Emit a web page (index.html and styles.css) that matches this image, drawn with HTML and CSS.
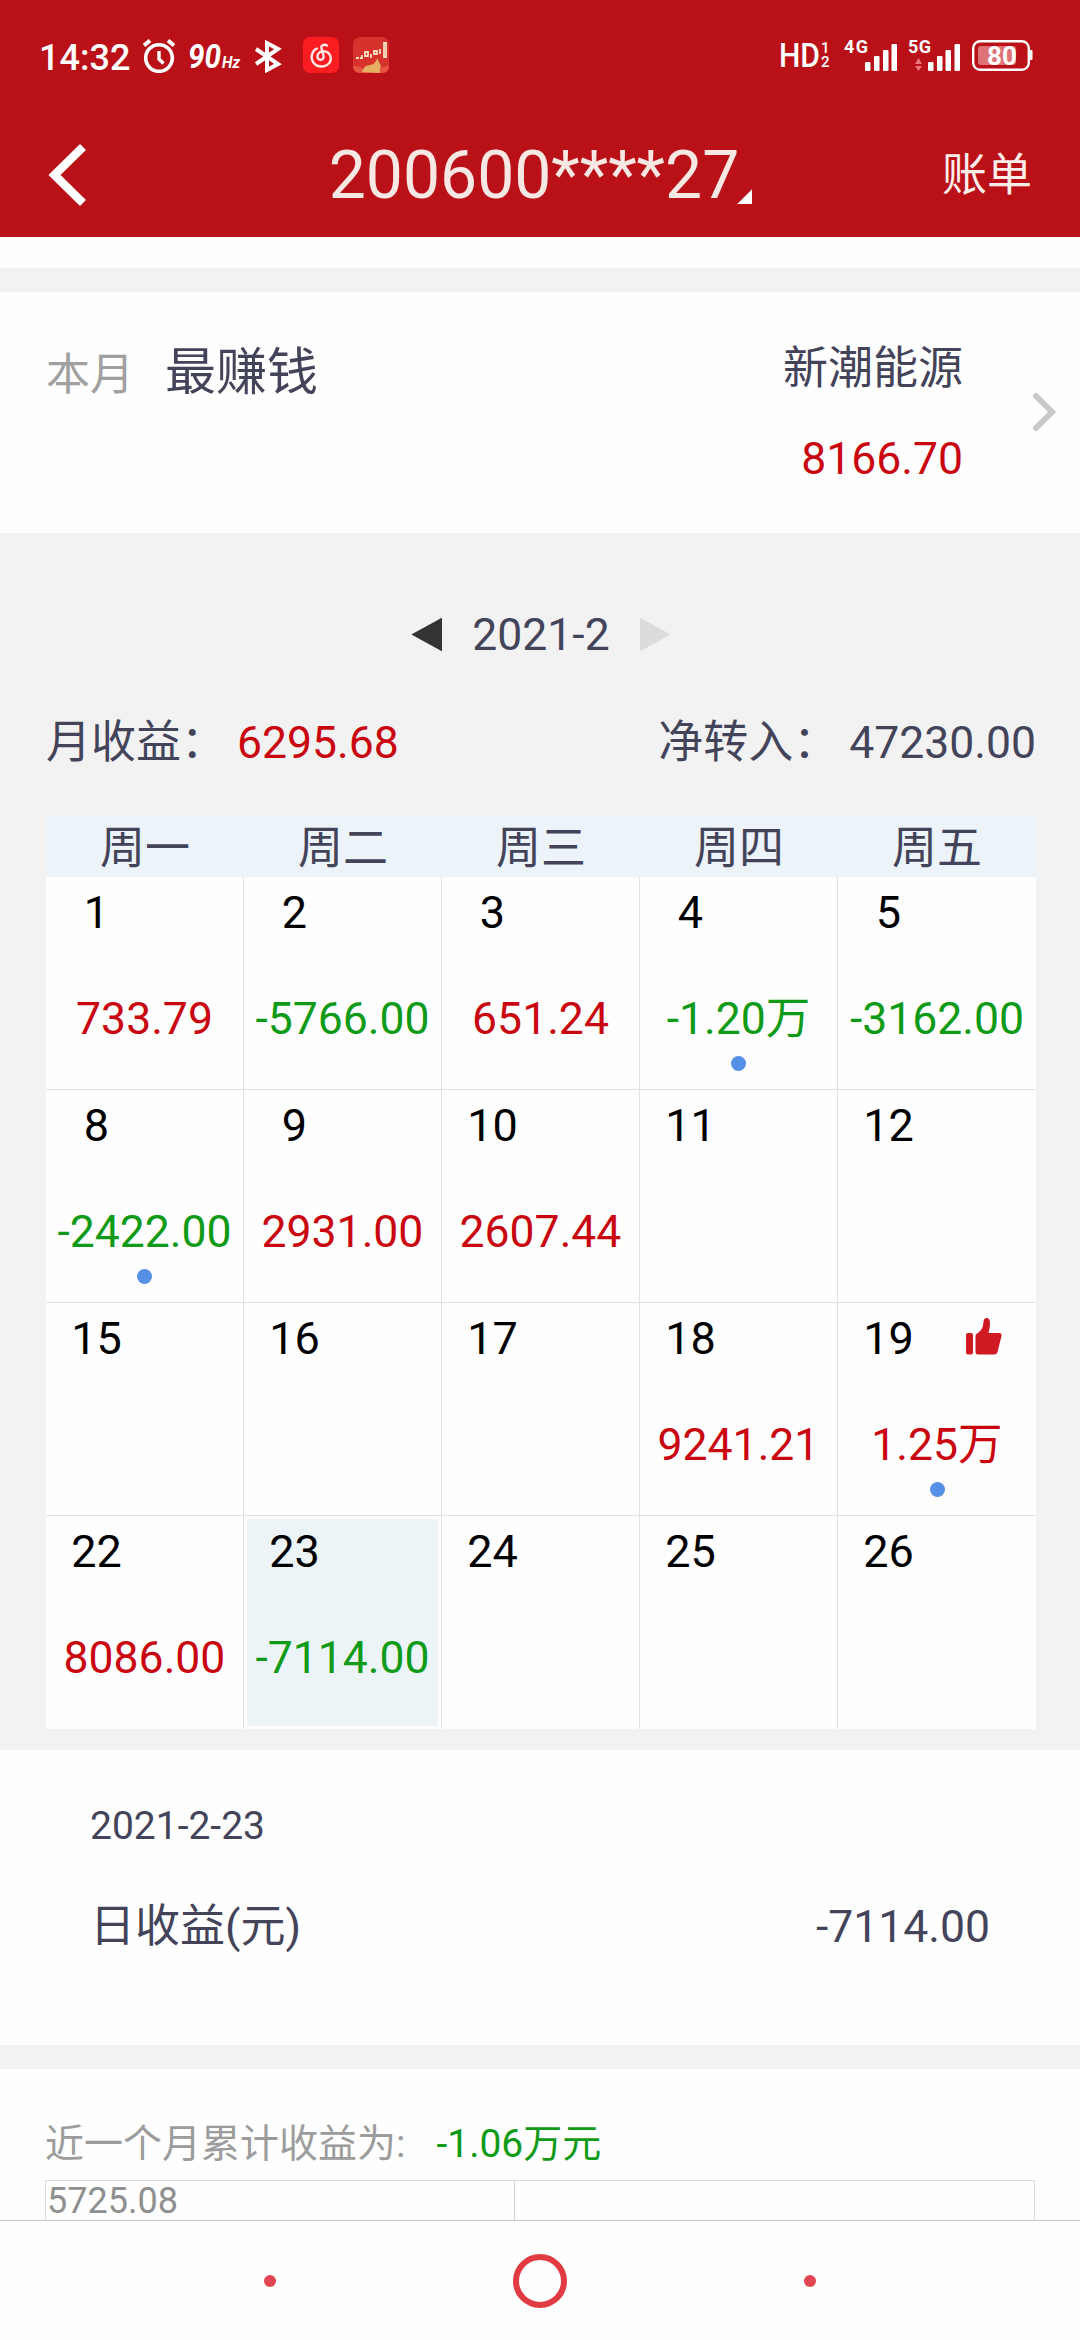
FILE: index.html
```html
<!DOCTYPE html>
<html lang="zh-CN">
<head>
    <meta charset="UTF-8">
    <meta name="viewport" content="width=device-width, initial-scale=1.0">
    <title>账单</title>
    <link rel="stylesheet" href="styles.css">
</head>
<body>
    <header class="top">
        <!-- 状态栏 -->
        <div class="status">
            <div class="status-left">
                <span class="time">14:32</span>
                <svg class="alarm" width="34" height="34" viewBox="0 0 34 34" fill="none" stroke="#fff">
                    <circle cx="17" cy="19" r="13.3" stroke-width="3.6"/>
                    <path d="M17 12v8l4.500 4.500" stroke-width="3.400"/>
                    <path d="M2 6.500l6-5M32 6.500l-6-5" stroke-width="4"/>
                </svg>
                <svg class="hz" width="56" height="34" viewBox="0 0 56 34">
                    <text x="1" y="29" font-size="33" textLength="33" lengthAdjust="spacingAndGlyphs">90</text>
                    <text x="35" y="29" font-size="17" textLength="18" lengthAdjust="spacingAndGlyphs">Hz</text>
                </svg>
                <svg class="bt" width="28" height="34" viewBox="0 0 28 34" fill="none" stroke="#fff" stroke-width="4">
                    <path d="M2 10l22 15-11 6V4l11 6L2 25"/>
                </svg>
                <svg class="app" width="36" height="36" viewBox="0 0 36 36">
                    <rect width="36" height="36" rx="7" fill="#fb1d22"/>
                    <path d="M24 8.500c-3-1.500-6-.5-5.500 2.500l2 8c1 5-6 5-6 .5 0-7 11-7 13 0 1.500 6-3.500 10-9 10-7 0-11-6-9.500-12 .8-3 2.500-5 5-6" fill="none" stroke="#ffe9e4" stroke-width="2.400" stroke-linecap="round"/>
                </svg>
                <svg class="app" width="36" height="36" viewBox="0 0 36 36">
                    <rect width="36" height="36" rx="7" fill="#d8322c"/>
                    <path d="M0 29q8 0 12 4h13q4-4 11-4v0q0 7-7 7H7q-7 0-7-7z" fill="#e8553f"/>
                    <path d="M9 35q2-7 8-7 6-1 7-7l2 4 2 4q-2 3-1 7z" fill="#e6b063"/>
                    <path d="M3 21h3M7 21h2v-3M12 15h3v4h-3zM18 17v4M21 14h3v3h-3zM27 12v5M31 6v14h2V6z" fill="none" stroke="#f6dfc0" stroke-width="1.800"/>
                </svg>
            </div>
            <div class="status-right">
                <svg width="54" height="36" viewBox="0 0 54 36">
                    <text x="1" y="30" font-size="33" font-weight="500" textLength="41" lengthAdjust="spacingAndGlyphs">HD</text>
                    <text x="43" y="15.500" font-size="15" font-weight="500">1</text>
                    <text x="43" y="29.500" font-size="15" font-weight="500">2</text>
                </svg>
                <svg class="signal" width="54" height="36" viewBox="0 0 54 36">
                    <text x="0" y="16" font-size="18" font-weight="700" textLength="24">4G</text>
                    <g fill="#fff">
                        <rect x="21" y="25" width="5.500" height="9" rx="1"/>
                        <rect x="30" y="19" width="5.500" height="15" rx="1"/>
                        <rect x="39" y="13" width="5.500" height="21" rx="1"/>
                        <rect x="47.500" y="7" width="5.500" height="27" rx="1"/>
                    </g>
                </svg>
                <svg class="signal second" width="54" height="36" viewBox="0 0 54 36">
                    <text x="0" y="16" font-size="18" font-weight="700" textLength="23">5G</text>
                    <path d="M7 27l3.500-6 3.500 6zM7 29l3.500 5 3.500-5z" fill="#ec7478"/>
                    <g fill="#fff">
                        <rect x="20" y="25" width="5.500" height="9" rx="1"/>
                        <rect x="29" y="19" width="5.500" height="15" rx="1"/>
                        <rect x="37.500" y="13" width="5.500" height="21" rx="1"/>
                        <rect x="46.500" y="7" width="5.500" height="27" rx="1"/>
                    </g>
                </svg>
                <svg class="battery" width="61" height="36" viewBox="0 0 61 36">
                    <rect x="1.200" y="4.200" width="55.600" height="28.600" rx="7" fill="none" stroke="#fff" stroke-width="2.400"/>
                    <rect x="57" y="13" width="3.500" height="10" rx="1" fill="#fff"/>
                    <rect x="6" y="9" width="38" height="19" rx="3" fill="#dd7377"/>
                    <text x="15" y="27.500" font-size="26" font-weight="700" textLength="30">80</text>
                </svg>
            </div>
        </div>
        <!-- 标题栏 -->
        <nav class="titlebar">
            <svg class="back" width="40" height="64" viewBox="0 0 40 64"><path d="M35 4L6.500 32 35 60" fill="none" stroke="#fff" stroke-width="8.500"/></svg>
            <h1>200600****27<i class="corner"></i></h1>
            <a class="bill">账单</a>
        </nav>
    </header>

    <section class="best">
        <div class="best-left"><span class="muted">本月</span><span class="best-label">最赚钱</span></div>
        <div class="best-right">
            <div>新潮能源</div>
            <div class="value up">8166.70</div>
        </div>
        <svg class="arrow" width="24" height="40" viewBox="0 0 24 40"><path d="M4 4l16 16L4 36" fill="none" stroke="#c9c9c9" stroke-width="6" stroke-linecap="round"/></svg>
    </section>

    <section class="month">
        <div class="picker">
            <i class="prev"></i>
            <span class="value">2021-2</span>
            <i class="next"></i>
        </div>
        <div class="totals">
            <div>月收益：<span class="num value up">6295.68</span></div>
            <div>净转入：<span class="num value">47230.00</span></div>
        </div>
        <div class="week">
            <div>周一</div><div>周二</div><div>周三</div><div>周四</div><div>周五</div>
        </div>
        <div class="days">
            <div class="day"><div class="date"><span>1</span></div><div class="amount up">733.79</div></div>
            <div class="day"><div class="date"><span>2</span></div><div class="amount down">-5766.00</div></div>
            <div class="day"><div class="date"><span>3</span></div><div class="amount up">651.24</div></div>
            <div class="day"><div class="date"><span>4</span></div><div class="amount down">-1.20万</div><i class="dot"></i></div>
            <div class="day"><div class="date"><span>5</span></div><div class="amount down">-3162.00</div></div>

            <div class="day"><div class="date"><span>8</span></div><div class="amount down">-2422.00</div><i class="dot"></i></div>
            <div class="day"><div class="date"><span>9</span></div><div class="amount up">2931.00</div></div>
            <div class="day"><div class="date"><span>10</span></div><div class="amount up">2607.44</div></div>
            <div class="day"><div class="date"><span>11</span></div></div>
            <div class="day"><div class="date"><span>12</span></div></div>

            <div class="day"><div class="date"><span>15</span></div></div>
            <div class="day"><div class="date"><span>16</span></div></div>
            <div class="day"><div class="date"><span>17</span></div></div>
            <div class="day"><div class="date"><span>18</span></div><div class="amount up">9241.21</div></div>
            <div class="day">
                <div class="date">
                    <span>19</span>
                    <svg class="thumb" width="36" height="37" viewBox="0 0 36 37" fill="#cf1a23">
                        <rect x="0" y="15" width="7" height="21.500" rx="2"/>
                        <path d="M9.500 18q0-2 2-2.800Q17 12 17.500 4q.3-4 3-4 3.500 0 3.500 5 0 5-1.500 10H33q3 0 2.500 3l-4 16q-.6 2.500-3 2.500H12q-2.500 0-2.500-2.500z"/>
                    </svg>
                </div>
                <div class="amount up">1.25万</div><i class="dot"></i>
            </div>

            <div class="day"><div class="date"><span>22</span></div><div class="amount up">8086.00</div></div>
            <div class="day selected"><div class="date"><span>23</span></div><div class="amount down">-7114.00</div></div>
            <div class="day"><div class="date"><span>24</span></div></div>
            <div class="day"><div class="date"><span>25</span></div></div>
            <div class="day"><div class="date"><span>26</span></div></div>
        </div>
    </section>

    <section class="detail">
        <div class="detail-date">2021-2-23</div>
        <div class="detail-row"><span>日收益(元)</span><span class="value">-7114.00</span></div>
    </section>

    <section class="trend">
        <div class="trend-title">近一个月累计收益为:<span class="down">-1.06万元</span></div>
        <div class="chart">
            <div class="chart-left">5725.08</div>
            <div class="chart-right"></div>
        </div>
    </section>

    <!-- 系统导航 -->
    <footer class="sysnav">
        <i class="small"></i>
        <i class="home"></i>
        <i class="small"></i>
    </footer>
</body>
</html>
```
FILE: styles.css
```css
* { margin: 0; padding: 0; box-sizing: border-box; }
body { width: 1080px; height: 2340px; overflow: hidden; background: #fefefe; color: #43435a; font: 45px/60px Roboto, "Noto Sans CJK SC", sans-serif; }
svg { display: block; flex: none; }
i { display: block; flex: none; }

.up { color: #c9060f; }
.down { color: #0f9a17; }
.muted { color: #a0a0a0; font-size: 44px; }
.value { font-size: 44.5px; }

/* 红色顶部 */
.top { height: 237px; background: #ba1119; color: #fff; }
.status { display: flex; justify-content: space-between; height: 112px; padding: 37px 47px 0 39px; }
.status text { fill: #fff; font-family: Roboto, sans-serif; }
.status-left, .status-right { display: flex; align-items: flex-start; }
.time { width: 92px; font-size: 36px; font-weight: 500; line-height: 42px; }
.alarm { margin: 2px 0 0 11px; }
.hz { margin: 2px 0 0 11px; }
.hz text { font-weight: 700; font-style: italic; }
.bt { margin: 2px 0 0 11px; }
.app { margin-left: 21px; }
.app + .app { margin-left: 14px; }
.signal { margin-left: 12px; }
.signal.second { margin-left: 10px; }
.battery { margin-left: 10px; }

.titlebar { display: grid; grid-template-columns: 1fr auto 1fr; align-items: center; height: 125px; padding: 0 48px; }
h1 { display: flex; align-items: flex-end; height: 78px; margin-top: 5px; padding-left: 1px; font-size: 66px; font-weight: 400; line-height: 80px; color: #f8e8e4; }
.corner { width: 15px; height: 15px; margin: 0 0 12px -2px; background: #fff; clip-path: polygon(100% 0, 100% 100%, 0 100%); }
.bill { justify-self: end; margin-top: 2px; color: #fdeeea; }

/* 本月最赚钱 */
.best { display: flex; height: 296px; padding: 86px 24px 0 46px; background: linear-gradient(#fefefe 31px, #f3f2f3 31px, #f3f2f3 55px, #fefefe 55px); }
.best-left { flex: 1; line-height: 99px; }
.best-label { margin-left: 31px; font-size: 51px; }
.best-right { line-height: 91px; text-align: right; }
.arrow { margin: 69px 0 0 69px; }

/* 收益日历 */
.month { height: 1217px; padding: 0 44px 0 46px; background: #f2f2f3; }
.picker { display: flex; justify-content: center; align-items: center; gap: 30px; height: 132px; padding-top: 71px; }
.picker i { width: 31px; height: 34px; }
.picker span { line-height: 62px; }
.prev { background: #333; clip-path: polygon(0 50%, 100% 0, 100% 100%); }
.next { background: #dcdcde; clip-path: polygon(0 0, 100% 50%, 0 100%); }
.totals { display: flex; justify-content: space-between; margin-top: 48px; }
.num { margin-left: 11px; }
.week { display: grid; grid-template-columns: repeat(5, 198px); height: 62px; margin-top: 42px; background: #ecf3f9; line-height: 67px; text-align: center; }
.days { display: grid; grid-template-columns: repeat(5, 198px); grid-auto-rows: 213px; }
.day { background: #fefefe; border-right: 1px solid #e0e1e4; border-bottom: 1px solid #dfe1e1; }
.day:nth-child(5n) { border-right: none; }
.day:nth-child(n+16) { border-bottom: none; }
.selected { background: #edf4f8; box-shadow: inset 0 0 0 3px #fefefe; }
.date { display: flex; height: 70px; line-height: 72px; color: #000; }
.date span { width: 101px; text-align: center; }
.thumb { margin: 15px 0 0 27px; }
.amount { margin-top: 42px; font-size: 44.5px; text-align: center; }
.dot { width: 15px; height: 15px; margin: 7px auto 0; border-radius: 50%; background: #5590e6; }

/* 当日明细 */
.detail { height: 295px; padding: 46px 90px 0; }
.detail-date { font-size: 39px; }
.detail-row { display: flex; justify-content: space-between; margin-top: 41px; }

.trend { height: 175px; padding: 69px 45px 0; background: linear-gradient(#f3f3f3 24px, #fefefe 24px); }
.trend-title { font-size: 39px; color: #9c9c9c; }
.trend-title span { margin-left: 31px; }
.chart { display: flex; height: 40px; margin-top: 6px; border: 1px solid #dcdcdc; border-bottom: none; font-size: 36px; line-height: 40px; color: #8f8f8f; }
.chart-left { width: 469px; padding-left: 1px; border-right: 1px solid #d0d0d0; }

.sysnav { display: flex; justify-content: center; align-items: center; gap: 237px; height: 120px; border-top: 1px solid #c9c9c9; background: #fefefe; }
.small { width: 12px; height: 12px; border-radius: 50%; background: #e24552; }
.home { width: 54px; height: 54px; border: 6px solid #e03c42; border-radius: 50%; }
```
